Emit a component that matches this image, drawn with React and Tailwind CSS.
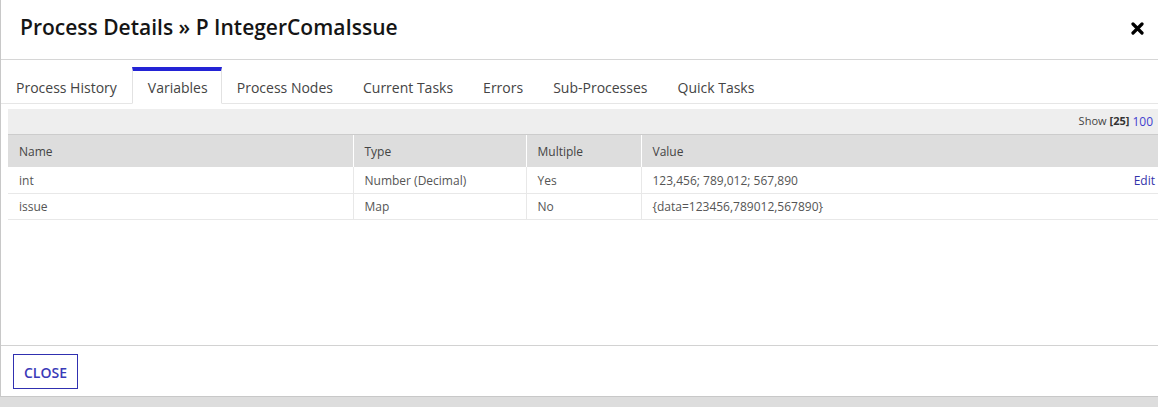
import { useState } from 'react';

const tabs = ['Process History', 'Variables', 'Process Nodes', 'Current Tasks', 'Errors', 'Sub-Processes', 'Quick Tasks'];

const variables = [
  { name: 'int', type: 'Number (Decimal)', multiple: 'Yes', value: '123,456; 789,012; 567,890', editable: true },
  { name: 'issue', type: 'Map', multiple: 'No', value: '{data=123456,789012,567890}', editable: false },
];

export default function App() {
  const [active, setActive] = useState('Variables');

  return (
    <div className="w-[1158px] h-[407px] bg-[#dddddd] overflow-hidden" style={{ fontFamily: '"Open Sans", sans-serif' }}>
      <div className="h-[397px] flex flex-col bg-white border-l border-b border-[#c8c8c8]">
        {/* Header */}
        <div className="h-[60px] shrink-0 flex items-center justify-between pl-[19px] pr-[14px] pb-[3px] border-b border-[#d6d6d6]">
          <h1 className="text-[21px] font-semibold text-[#151515]">Process Details » P IntegerComaIssue</h1>
          <button className="text-[#000] leading-none">
            <svg width="13" height="13" viewBox="0 0 13 13">
              <path d="M2 2 L11 11 M11 2 L2 11" stroke="#000" strokeWidth="3.2" strokeLinecap="round" />
            </svg>
          </button>
        </div>

        {/* Tabs */}
        <div className="h-[44px] shrink-0 flex items-stretch pt-[7px] border-b border-[#e6e6e6]">
          {tabs.map((t) => (
            <button
              key={t}
              onClick={() => setActive(t)}
              className={`px-[15px] pt-px text-[14px] text-[#444] border-t-4 -mb-px ${
                t === active
                  ? 'bg-white border-t-[#2323d5] border-x border-x-[#e2e2e2] border-b border-b-white w-[90px] px-0'
                  : 'border-t-transparent border-b border-b-[#e6e6e6]'
              }`}
            >
              {t}
            </button>
          ))}
        </div>

        {/* Variables table */}
        <div className="pl-[7px] pt-[5px] flex-1">
          <div className="h-[26px] bg-[#eeeeee] border-b border-[#cccccc] flex items-center justify-end pr-[5px] text-[11px] text-[#444]">
            Show <span className="font-bold ml-[3px] text-[#333]">[25]</span>
            <a className="ml-[3px] text-[12px] text-[#3f3fcf] cursor-pointer">100</a>
          </div>
          <table className="w-full text-left text-[12px] text-[#555] border-collapse">
            <thead>
              <tr className="h-[32px] bg-[#dddddd] text-[#444]">
                <th className="font-normal pl-[11px] pt-px w-[345px] border-r border-white">Name</th>
                <th className="font-normal pl-[11px] pt-px w-[173px] border-r border-white">Type</th>
                <th className="font-normal pl-[11px] pt-px w-[115px] border-r border-white">Multiple</th>
                <th className="font-normal pl-[11px] pt-px">Value</th>
              </tr>
            </thead>
            <tbody>
              {variables.map((v) => (
                <tr key={v.name} className="h-[26px] border-b border-[#e8e8e8]">
                  <td className="pl-[11px] pt-[2px] border-r border-[#e8e8e8]">{v.name}</td>
                  <td className="pl-[11px] pt-[2px] border-r border-[#e8e8e8]">{v.type}</td>
                  <td className="pl-[11px] pt-[2px] border-r border-[#e8e8e8]">{v.multiple}</td>
                  <td className="pl-[11px] pt-[2px]">
                    <div className="flex justify-between pr-[3px]">
                      <span>{v.value}</span>
                      {v.editable && <a className="text-[#3333aa] cursor-pointer">Edit</a>}
                    </div>
                  </td>
                </tr>
              ))}
            </tbody>
          </table>
        </div>

        {/* Footer */}
        <div className="h-[51px] shrink-0 border-t border-[#d2d2d2] flex items-center pl-[12px]">
          <button className="h-[35px] w-[65px] pt-[3px] border border-[#3030b0] text-[#3a3ab8] text-[14px] font-semibold">
            CLOSE
          </button>
        </div>
      </div>
    </div>
  );
}
